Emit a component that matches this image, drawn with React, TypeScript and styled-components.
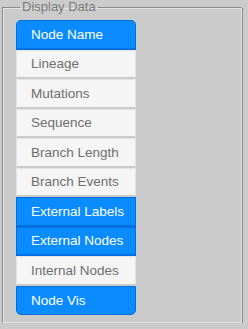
import styled, { createGlobalStyle } from 'styled-components';

const GlobalStyle = createGlobalStyle`
  html, body {
    margin: 0;
    padding: 0;
    background: #cbcbcb;
    font-family: "Liberation Sans", Arial, sans-serif;
  }
`;

const Panel = styled.fieldset`
  box-sizing: border-box;
  width: 240px;
  height: 322px;
  margin: 1px 0 0 2px;
  padding: 7px 0 0 13px;
  border: 1px solid;
  border-color: #8a8a8a #e2e2e2 #e2e2e2 #8a8a8a;
  box-shadow: inset 1px 1px 0 #e2e2e2, 1px 1px 0 #8a8a8a;
`;

const Legend = styled.legend`
  margin-left: 4px;
  padding: 0 2px;
  font-size: 13px;
  color: #7a7a7a;
  line-height: 12px;
`;

const List = styled.div`
  display: flex;
  flex-direction: column;
  width: 120px;
`;

const Item = styled.button<{ $on: boolean }>`
  box-sizing: border-box;
  height: 29.5px;
  margin: 0;
  padding: 0 0 0 14px;
  text-align: left;
  font-family: "Liberation Sans", Arial, sans-serif;
  font-size: 13.5px;
  cursor: pointer;
  color: ${(p) => (p.$on ? '#ffffff' : '#6e6e6e')};
  background: ${(p) => (p.$on ? '#0a8cff' : '#f5f5f5')};
  border: 1px solid ${(p) => (p.$on ? '#0070e0' : '#e4e4e4')};
  border-bottom: 2px solid ${(p) => (p.$on ? '#0070e0' : '#cbcbcb')};

  &:first-child {
    border-radius: 5px 5px 0 0;
  }
  &:last-child {
    border-radius: 0 0 5px 5px;
    border-bottom: 1px solid #0070e0;
  }
`;

const items: [string, boolean][] = [
  ['Node Name', true],
  ['Lineage', false],
  ['Mutations', false],
  ['Sequence', false],
  ['Branch Length', false],
  ['Branch Events', false],
  ['External Labels', true],
  ['External Nodes', true],
  ['Internal Nodes', false],
  ['Node Vis', true],
];

export default function App() {
  return (
    <>
      <GlobalStyle />
      <Panel>
        <Legend>Display Data</Legend>
        <List>
          {items.map(([label, on]) => (
            <Item key={label} $on={on}>
              {label}
            </Item>
          ))}
        </List>
      </Panel>
    </>
  );
}
